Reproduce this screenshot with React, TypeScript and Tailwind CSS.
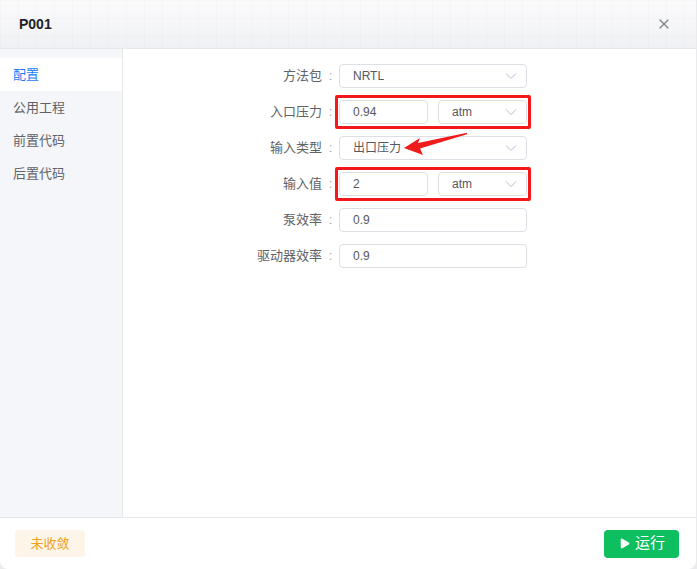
import { X, Play } from "lucide-react";

const font = { fontFamily: '"Liberation Sans", "Noto Sans CJK SC", sans-serif' };

const menu = ["配置", "公用工程", "前置代码", "后置代码"];

const Chevron = () => (
  <svg width="12" height="8" viewBox="0 0 12 8" className="text-[#b8bcc4]">
    <path d="M1 1.5 L6 6.5 L11 1.5" fill="none" stroke="currentColor" strokeWidth="1" />
  </svg>
);

const Input = ({ value, className }: { value: string; className?: string }) => (
  <div
    className={`flex h-[24px] items-center rounded-[4px] border border-[#dcdfe6] bg-white pl-[13px] text-[12px] text-[#55585e] ${className ?? ""}`}
  >
    {value}
  </div>
);

const Select = ({ value, className }: { value: string; className?: string }) => (
  <div
    className={`flex h-[24px] items-center justify-between rounded-[4px] border border-[#dcdfe6] bg-white pl-[13px] pr-[9px] text-[12px] text-[#55585e] ${className ?? ""}`}
  >
    <span>{value}</span>
    <Chevron />
  </div>
);

const Row = ({ label, children }: { label: string; children: React.ReactNode }) => (
  <div className="flex h-[24px] items-center">
    <div className="flex w-[99px] items-center justify-end text-[13px] text-[#606266]">
      <span>{label}</span>
      <span className="w-[17px] text-center text-[#a0a3a8]">:</span>
    </div>
    {children}
  </div>
);

const Marked = ({ children }: { children: React.ReactNode }) => (
  <div className="relative flex w-[188px] gap-[10px]">
    {children}
    <div className="pointer-events-none absolute -inset-x-[4px] -inset-y-[5px] rounded-[2px] border-[3px] border-[#f5181b]" />
  </div>
);

export default function App() {
  return (
    <div style={font} className="relative h-[569px] w-[697px] bg-[#ebebed]">
      <div className="flex h-[569px] w-[696px] flex-col overflow-hidden rounded-b-[8px] bg-white">
        {/* header */}
        <div className="flex h-[49px] shrink-0 items-center justify-between border-b border-[#e6e8eb] bg-[#f3f4f7] bg-[linear-gradient(rgba(0,0,0,0.014)_1px,transparent_1px),linear-gradient(90deg,rgba(0,0,0,0.014)_1px,transparent_1px),linear-gradient(180deg,#fbfbfc,#f0f1f4)] bg-[length:18px_18px,18px_18px,100%_100%] pl-[19px] pr-[24px]">
          <span className="text-[14px] font-bold text-[#1f2329]">P001</span>
          <X size={16} strokeWidth={2} className="text-[#85888e]" />
        </div>

        {/* body */}
        <div className="flex min-h-0 flex-1">
          <div className="w-[123px] shrink-0 border-r border-[#e6e8eb] bg-[#f5f6fa] pt-[9px]">
            {menu.map((m, i) => (
              <div
                key={m}
                className={`flex h-[33px] items-center pl-[13px] text-[13px] ${
                  i === 0 ? "bg-white text-[#1d7bf5]" : "text-[#5f6266]"
                }`}
              >
                {m}
              </div>
            ))}
          </div>

          <div className="flex flex-1 flex-col gap-[12px] pl-[117px] pt-[15px]">
            <Row label="方法包">
              <Select value="NRTL" className="w-[188px]" />
            </Row>
            <Row label="入口压力">
              <Marked>
                <Input value="0.94" className="w-[89px]" />
                <Select value="atm" className="w-[89px]" />
              </Marked>
            </Row>
            <Row label="输入类型">
              <Select value="出口压力" className="w-[188px]" />
            </Row>
            <Row label="输入值">
              <Marked>
                <Input value="2" className="w-[89px]" />
                <Select value="atm" className="w-[89px]" />
              </Marked>
            </Row>
            <Row label="泵效率">
              <Input value="0.9" className="w-[188px]" />
            </Row>
            <Row label="驱动器效率">
              <Input value="0.9" className="w-[188px]" />
            </Row>
          </div>
        </div>

        {/* footer */}
        <div className="flex h-[52px] shrink-0 items-center justify-between border-t border-[#e4e7ed] pl-[15px] pr-[17px]">
          <div className="flex h-[27px] w-[70px] items-center justify-center rounded-[4px] bg-[#fdf5e8] text-[13px] text-[#f0a020]">
            未收敛
          </div>
          <div className="flex h-[28px] w-[75px] items-center justify-center gap-[4px] rounded-[4px] bg-[#0dbf5f] text-[15px] text-white">
            <Play size={13} fill="white" strokeWidth={0} />
            <span>运行</span>
          </div>
        </div>
      </div>

      {/* annotation arrow */}
      <svg className="pointer-events-none absolute left-0 top-0" width="697" height="569">
        <polygon
          points="404,148 420,138 418,143 467,132.8 467,134.2 420,148.5 423,155"
          fill="#f01c1c"
        />
      </svg>
    </div>
  );
}
